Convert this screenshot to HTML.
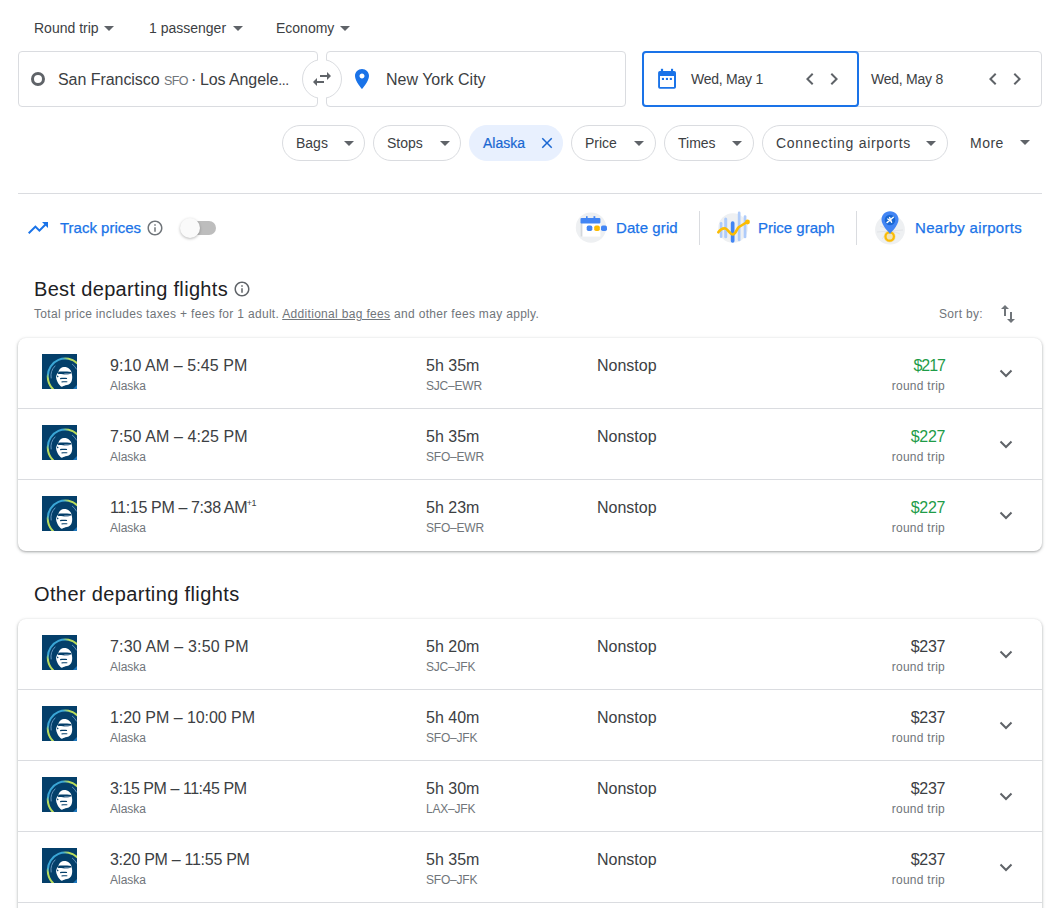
<!DOCTYPE html>
<html><head><meta charset="utf-8">
<style>
*{box-sizing:border-box;margin:0;padding:0}
html,body{width:1049px;height:908px;overflow:hidden;background:#fff;font-family:"Liberation Sans",sans-serif;color:#3c4043}
.a{position:absolute;white-space:nowrap}
svg{position:absolute;overflow:visible}
.t14{font-size:14px;color:#3c4043}
.box{position:absolute;border:1px solid #dadce0;border-radius:4px;background:#fff}
.chip{position:absolute;top:125px;height:36px;border:1px solid #dadce0;border-radius:18px;background:#fff}
.chip span{position:absolute;top:9px;font-size:14px;color:#3c4043;white-space:nowrap}
.card{position:absolute;left:18px;width:1024px;border-radius:8px;background:#fff;box-shadow:0 1px 2px 0 rgba(60,64,67,.3),0 1px 3px 1px rgba(60,64,67,.15)}
.row{position:absolute;left:0;width:1024px;height:71px;border-top:1px solid #dadce0}
.row.first{border-top:none}
.logo{position:absolute;left:24px;top:16px;width:35px;height:35px;background:#05446e;overflow:hidden}
.logo svg{left:0;top:0}
.tm{position:absolute;left:92px;top:19px;font-size:16px;color:#3c4043;white-space:nowrap}
.o{font-style:normal;margin-right:-2px}
.tm sup{font-size:9px;position:relative;top:-1px;vertical-align:top;letter-spacing:-0.4px;margin-left:-0.5px}
.al{position:absolute;left:92px;top:41px;font-size:12px;color:#70757a}
.du{position:absolute;left:408px;top:19px;font-size:16px;color:#3c4043;white-space:nowrap}
.rt{position:absolute;left:408px;top:41px;font-size:12px;color:#70757a;letter-spacing:-0.2px}
.ns{position:absolute;left:579px;top:19px;font-size:16px;color:#3c4043}
.pr{position:absolute;right:97px;top:19px;font-size:16px;color:#3c4043;letter-spacing:-1px}
.pr.g{color:#1f9c48}
.rtp{position:absolute;right:97px;top:41px;font-size:12px;color:#70757a;letter-spacing:0.26px}
.chev{left:981px;top:31px}
.blue{color:#1a73e8}
.med{-webkit-text-stroke:0.25px #1a73e8}
</style></head><body>
<svg width="0" height="0" style="position:absolute">
<defs>
<linearGradient id="akg" gradientUnits="userSpaceOnUse" x1="8" y1="34" x2="33" y2="5">
<stop offset="0" stop-color="#b9dc5c"/><stop offset="0.15" stop-color="#b9dc5c"/><stop offset="0.25" stop-color="#3aa6d6"/><stop offset="0.8" stop-color="#3aa6d6"/><stop offset="0.9" stop-color="#b9dc5c"/><stop offset="1" stop-color="#b9dc5c"/>
</linearGradient>
<g id="ak">
<rect width="35" height="35" fill="#043f6a"/>
<path d="M11.42 35.5 A17.5 17.5 0 0 1 5.8 22.15 A17.5 17.5 0 0 1 35.5 9.5" fill="none" stroke="url(#akg)" stroke-width="2"/>
<path d="M13.3 11.7 A14.5 14.5 0 0 0 9.2 24.4" fill="none" stroke="#7fa9cf" stroke-width="0.8"/>
<path d="M30.1 10 A13.5 13.5 0 0 1 34.6 15.4" fill="none" stroke="#7fa9cf" stroke-width="0.8"/>
<path d="M31 35 L35 31 L35 35Z" fill="#1f78bd"/>
<path d="M16.9 16.5 C18 14.5 19.8 13.1 21.8 13 C24 12.9 26 13.6 27.1 14.7 C28.2 15.6 28.8 16.4 29.1 17.3 C29.8 19.5 30.3 21.5 30.2 23.4 C30.1 25.3 29.8 27 29.1 28.3 C28.5 29.3 27.6 30 26.7 30.4 C25.6 30.8 24.4 31 23.4 31.2 C22 31.6 20.8 32.6 19.8 32.8 C18.8 32.5 18 31.6 17.3 30.8 C16.4 29.8 15.8 28.6 15.3 27.5 C14.7 26.2 14.2 24.8 14.1 23.4 C14.1 22.5 14.2 21.7 14.5 21 C14.9 20 15.5 19.2 16.1 18.5 Z" fill="#fff"/>
<path d="M16.3 17.8 C19 17.4 24 17.4 29.2 17.9 L29.4 19.6 C27 19.4 25 20.6 22.5 20.4 C20.5 20.2 18.5 20.4 16 20 Z" fill="#043f6a"/>
<path d="M22 19.8 C23.5 19.4 26 19.4 27.6 20 C26.4 21 24 21.2 22 20.6Z" fill="#9fb4c8"/>
<path d="M18.1 23.9 C20.3 23.6 23 23.6 25.1 23.9 L25 25.1 C23 25 20.5 25 18.1 25.2 Z" fill="#043f6a"/>
<path d="M19.4 27.5 C21.5 27.3 23.8 27.3 25.5 27.5 L25.2 28.3 C23.5 28.2 21.5 28.3 19.6 28.4 Z" fill="#043f6a"/>
<path d="M14.6 21.6 C15.4 21.4 16.2 21.9 16.6 22.6 L15.8 23.6 C15.2 23.1 14.7 22.4 14.6 21.6Z" fill="#043f6a"/>
</g>
</defs>
</svg>

<!-- top selectors -->
<div class="a t14" style="left:34px;top:20px">Round trip</div>
<svg style="left:97px;top:16px" width="24" height="24" viewBox="0 0 24 24"><path d="M7 10l5 5 5-5z" fill="#5f6368"/></svg>
<div class="a t14" style="left:149px;top:20px">1 passenger</div>
<svg style="left:226px;top:16px" width="24" height="24" viewBox="0 0 24 24"><path d="M7 10l5 5 5-5z" fill="#5f6368"/></svg>
<div class="a t14" style="left:276px;top:20px">Economy</div>
<svg style="left:333px;top:16px" width="24" height="24" viewBox="0 0 24 24"><path d="M7 10l5 5 5-5z" fill="#5f6368"/></svg>

<!-- origin / destination -->
<div class="box" style="left:18px;top:51px;width:300px;height:56px"></div>
<div class="box" style="left:326px;top:51px;width:300px;height:56px"></div>
<div style="position:absolute;left:302px;top:59px;width:40px;height:40px;border-radius:50%;border:1px solid #dadce0;background:#fff"></div>
<div style="position:absolute;left:318px;top:57px;width:8px;height:4px;background:#fff"></div><div style="position:absolute;left:318px;top:97px;width:8px;height:4px;background:#fff"></div>
<svg style="left:310px;top:67px" width="24" height="24" viewBox="0 0 24 24"><path d="M6.99 11L3 15l3.99 4v-3H14v-2H6.99v-3zM21 9l-3.99-4v3H10v2h7.01v3L21 9z" fill="#5f6368"/></svg>
<div style="position:absolute;left:31px;top:72px;width:14px;height:14px;border-radius:50%;border:3px solid #5f6368"></div>
<div class="a" style="left:58px;top:71px;font-size:16px;color:#3c4043;letter-spacing:-0.05px">San Francisco</div>
<div class="a" style="left:164px;top:73.5px;font-size:12.5px;color:#70757a;letter-spacing:-0.6px">SFO</div>
<div class="a" style="left:191px;top:71px;font-size:16px;color:#3c4043">·</div>
<div class="a" style="left:200px;top:71px;font-size:16px;color:#3c4043;letter-spacing:-0.1px">Los Angele<span style="letter-spacing:-0.4px;font-size:14px">...</span></div>
<svg style="left:350px;top:67px" width="24" height="24" viewBox="0 0 24 24"><path d="M12 2C8.130 2 5 5.13 5 9c0 5.25 7 13 7 13s7-7.75 7-13c0-3.87-3.13-7-7-7zm0 9.5c-1.38 0-2.5-1.12-2.5-2.5s1.12-2.5 2.5-2.5 2.5 1.12 2.5 2.5-1.12 2.5-2.5 2.5z" fill="#1a73e8"/></svg>
<div class="a" style="left:386px;top:71px;font-size:16px;color:#3c4043">New York City</div>

<!-- dates -->
<div class="box" style="left:642px;top:51px;width:400px;height:56px"></div>
<div style="position:absolute;left:642px;top:51px;width:217px;height:56px;border:2px solid #1a73e8;border-radius:4px"></div>
<svg style="left:652px;top:64px" width="30" height="30" viewBox="0 0 30 30"><rect x="6.1" y="6.9" width="17.9" height="17.9" rx="1.8" fill="#1a73e8"/><rect x="8" y="12" width="14" height="11" fill="#fff"/><rect x="8.9" y="4.8" width="2.2" height="3" fill="#1a73e8"/><rect x="19" y="4.8" width="2.1" height="3" fill="#1a73e8"/><rect x="9.9" y="13.9" width="2.1" height="2.1" fill="#1a73e8"/><rect x="13.9" y="13.9" width="2.1" height="2.1" fill="#1a73e8"/><rect x="17.8" y="13.9" width="2.1" height="2.1" fill="#1a73e8"/></svg>
<div class="a" style="left:691px;top:71px;font-size:14px;color:#3c4043;letter-spacing:-0.25px">Wed, May 1</div>
<svg style="left:798px;top:67px" width="24" height="24" viewBox="0 0 24 24"><path d="M15.41 7.41L14 6l-6 6 6 6 1.41-1.41L10.83 12z" fill="#5f6368"/></svg>
<svg style="left:822px;top:67px" width="24" height="24" viewBox="0 0 24 24"><path d="M10 6L8.59 7.41 13.17 12l-4.58 4.59L10 18l6-6z" fill="#5f6368"/></svg>
<div class="a" style="left:871px;top:71px;font-size:14px;color:#3c4043;letter-spacing:-0.25px">Wed, May 8</div>
<svg style="left:981px;top:67px" width="24" height="24" viewBox="0 0 24 24"><path d="M15.41 7.41L14 6l-6 6 6 6 1.41-1.41L10.83 12z" fill="#5f6368"/></svg>
<svg style="left:1005px;top:67px" width="24" height="24" viewBox="0 0 24 24"><path d="M10 6L8.59 7.41 13.17 12l-4.58 4.59L10 18l6-6z" fill="#5f6368"/></svg>

<!-- chips -->
<div class="chip" style="left:282px;width:83px"><span style="left:13px">Bags</span><svg style="left:54px;top:5px" width="24" height="24" viewBox="0 0 24 24"><path d="M7 10l5 5 5-5z" fill="#5f6368"/></svg></div>
<div class="chip" style="left:373px;width:88px"><span style="left:13px">Stops</span><svg style="left:59px;top:5px" width="24" height="24" viewBox="0 0 24 24"><path d="M7 10l5 5 5-5z" fill="#5f6368"/></svg></div>
<div class="chip" style="left:469px;width:94px;background:#e8f0fe;border-color:#e8f0fe"><span style="left:13px;color:#1967d2;-webkit-text-stroke:0.2px #1967d2">Alaska</span><svg style="left:68px;top:8px" width="18" height="18" viewBox="0 0 24 24"><path d="M19 6.410L17.59 5 12 10.59 6.41 5 5 6.41 10.59 12 5 17.59 6.41 19 12 13.41 17.59 19 19 17.59 13.41 12z" fill="#1967d2"/></svg></div>
<div class="chip" style="left:571px;width:85px"><span style="left:13px">Price</span><svg style="left:55px;top:5px" width="24" height="24" viewBox="0 0 24 24"><path d="M7 10l5 5 5-5z" fill="#5f6368"/></svg></div>
<div class="chip" style="left:664px;width:90px"><span style="left:13px">Times</span><svg style="left:60px;top:5px" width="24" height="24" viewBox="0 0 24 24"><path d="M7 10l5 5 5-5z" fill="#5f6368"/></svg></div>
<div class="chip" style="left:762px;width:186px"><span style="left:13px;letter-spacing:0.72px">Connecting airports</span><svg style="left:156px;top:5px" width="24" height="24" viewBox="0 0 24 24"><path d="M7 10l5 5 5-5z" fill="#5f6368"/></svg></div>
<div class="a" style="left:970px;top:135px;font-size:14px;color:#3c4043;letter-spacing:0.5px">More</div>
<svg style="left:1013px;top:130px" width="24" height="24" viewBox="0 0 24 24"><path d="M7 10l5 5 5-5z" fill="#5f6368"/></svg>

<div style="position:absolute;left:18px;top:193px;width:1024px;height:1px;background:#dadce0"></div>

<!-- track prices -->
<svg style="left:26px;top:216px" width="24" height="24" viewBox="0 0 24 24"><path d="M16 6l2.29 2.29-4.88 4.88-4-4L2 16.59 3.41 18l6-6 4 4 6.3-6.29L22 12V6z" fill="#1a73e8"/></svg>
<div class="a blue med" style="left:60px;top:219px;font-size:15px">Track prices</div>
<svg style="left:146px;top:219px" width="18" height="18" viewBox="0 0 24 24"><path d="M11 7h2v2h-2zm0 4h2v6h-2zm1-9C6.48 2 2 6.48 2 12s4.48 10 10 10 10-4.48 10-10S17.52 2 12 2zm0 18c-4.41 0-8-3.59-8-8s3.59-8 8-8 8 3.59 8 8-3.59 8-8 8z" fill="#70757a"/></svg>
<div style="position:absolute;left:186px;top:221px;width:30px;height:14px;border-radius:7px;background:#bdbdbd"></div>
<div style="position:absolute;left:180px;top:218px;width:20px;height:20px;border-radius:50%;background:#fafafa;box-shadow:0 1px 3px rgba(0,0,0,.28)"></div>

<!-- views -->
<svg style="left:576px;top:212px" width="32" height="32" viewBox="0 0 32 32">
<circle cx="15" cy="15.6" r="15.2" fill="#eef0f2"/>
<rect x="4.5" y="10" width="19.9" height="14.6" fill="#fff"/><rect x="4.5" y="10" width="1.9" height="14.6" fill="#d4d7db"/>
<rect x="4.5" y="6" width="19.9" height="5.6" rx="1" fill="#4285f4"/>
<rect x="10" y="4.2" width="1.6" height="2.5" fill="#4285f4"/><rect x="17.5" y="4.2" width="1.8" height="2.5" fill="#4285f4"/>
<rect x="10.7" y="13.4" width="5.6" height="5.6" rx="1.8" fill="#4285f4"/><rect x="18.2" y="13.4" width="5.6" height="5.6" rx="1.8" fill="#fbbc04"/><rect x="25" y="13.4" width="6" height="5.6" rx="1.8" fill="#4285f4"/>
</svg>
<div class="a blue med" style="left:616px;top:219px;font-size:15px;letter-spacing:0.1px">Date grid</div>
<div style="position:absolute;left:699px;top:211px;width:1px;height:34px;background:#dadce0"></div>
<svg style="left:716px;top:208px" width="36" height="38" viewBox="0 0 36 38">
<circle cx="17" cy="20" r="14.8" fill="#eef0f2"/>
<rect x="3.8" y="14" width="2.6" height="16" rx="1.3" fill="#aecbfa"/>
<rect x="8.2" y="9.6" width="3" height="20.6" rx="1.5" fill="#aecbfa"/>
<rect x="14.8" y="13.2" width="3.7" height="21.5" rx="1.8" fill="#4285f4"/>
<rect x="21.8" y="3.6" width="2.7" height="29.6" rx="1.3" fill="#aecbfa"/>
<rect x="27.7" y="7.3" width="2.7" height="22.9" rx="1.3" fill="#aecbfa"/>
<path d="M2.3 24.3 C4 22 6.5 19.5 9.7 20.6 C12 21.5 14.5 27 17 26.5 C20 26 21 20 23 19 C25.5 17.5 28 16 31 14" fill="none" stroke="#fbbc04" stroke-width="2.6" stroke-linecap="round"/>
<circle cx="31.5" cy="14" r="2.4" fill="#fbbc04"/>
</svg>
<div class="a blue med" style="left:758px;top:219px;font-size:15px">Price graph</div>
<div style="position:absolute;left:856px;top:211px;width:1px;height:34px;background:#dadce0"></div>
<svg style="left:872px;top:208px" width="36" height="40" viewBox="0 0 36 40">
<circle cx="18" cy="21.7" r="14.9" fill="#eef0f2"/>
<path d="M8 18 L28 26 M10 31 L26 12 M5 24 L31 22" stroke="#e2e4e7" stroke-width="1"/>
<circle cx="17.7" cy="28.5" r="4.2" fill="none" stroke="#fbbc04" stroke-width="2.2"/>
<circle cx="17.7" cy="28.5" r="6" fill="#fbbc04" opacity="0.25"/>
<path d="M18 3.3 C12.8 3.3 9.5 7 9.5 11.8 C9.5 17.5 18 25.8 18 25.8 C18 25.8 26.5 17.5 26.5 11.8 C26.5 7 23.2 3.3 18 3.3 Z" fill="#4285f4"/>
<circle cx="18" cy="12" r="5.3" fill="#1967d2"/>
<path d="M15 14.6 L21.3 9.3 M15.8 11 L19.3 13.3 M17.6 9.6 L19.6 14.3" stroke="#fff" stroke-width="1.4" stroke-linecap="round"/>
</svg>
<div class="a blue med" style="left:915px;top:219px;font-size:15px;letter-spacing:0.3px">Nearby airports</div>

<!-- heading -->
<div class="a" style="left:34px;top:278px;font-size:20px;color:#202124;letter-spacing:0.33px">Best departing flights</div>
<svg style="left:233px;top:280px" width="18" height="18" viewBox="0 0 24 24"><path d="M11 7h2v2h-2zm0 4h2v6h-2zm1-9C6.48 2 2 6.48 2 12s4.48 10 10 10 10-4.48 10-10S17.52 2 12 2zm0 18c-4.41 0-8-3.59-8-8s3.59-8 8-8 8 3.59 8 8-3.59 8-8 8z" fill="#5f6368"/></svg>
<div class="a" style="left:34px;top:307px;font-size:12px;color:#70757a;letter-spacing:0.32px">Total price includes taxes + fees for 1 adult. <span style="text-decoration:underline">Additional bag fees</span> and other fees may apply.</div>
<div class="a" style="left:939px;top:307px;font-size:12px;color:#70757a;letter-spacing:0.32px">Sort by:</div>
<svg style="left:996px;top:302px" width="24" height="24" viewBox="0 0 24 24"><path d="M16 17.01V10h-2v7.01h-3L15 21l4-3.99h-3zM9 3L5 6.99h3V14h2V6.99h3L9 3z" fill="#70757a"/></svg>

<div class="card" style="top:338px;height:213px">
<div class="row first" style="top:0px">
<div class="logo"><svg width="35" height="35" viewBox="0 0 35 35"><g>
<rect width="35" height="35" fill="#043f6a"/>
<path d="M11.42 35.5 A17.5 17.5 0 0 1 5.8 22.15 A17.5 17.5 0 0 1 35.5 9.5" fill="none" stroke="url(#akg)" stroke-width="2"/>
<path d="M13.3 11.7 A14.5 14.5 0 0 0 9.2 24.4" fill="none" stroke="#7fa9cf" stroke-width="0.8"/>
<path d="M30.1 10 A13.5 13.5 0 0 1 34.6 15.4" fill="none" stroke="#7fa9cf" stroke-width="0.8"/>
<path d="M31 35 L35 31 L35 35Z" fill="#1f78bd"/>
<path d="M16.9 16.5 C18 14.5 19.8 13.1 21.8 13 C24 12.9 26 13.6 27.1 14.7 C28.2 15.6 28.8 16.4 29.1 17.3 C29.8 19.5 30.3 21.5 30.2 23.4 C30.1 25.3 29.8 27 29.1 28.3 C28.5 29.3 27.6 30 26.7 30.4 C25.6 30.8 24.4 31 23.4 31.2 C22 31.6 20.8 32.6 19.8 32.8 C18.8 32.5 18 31.6 17.3 30.8 C16.4 29.8 15.8 28.6 15.3 27.5 C14.7 26.2 14.2 24.8 14.1 23.4 C14.1 22.5 14.2 21.7 14.5 21 C14.9 20 15.5 19.2 16.1 18.5 Z" fill="#fff"/>
<path d="M16.3 17.8 C19 17.4 24 17.4 29.2 17.9 L29.4 19.6 C27 19.4 25 20.6 22.5 20.4 C20.5 20.2 18.5 20.4 16 20 Z" fill="#043f6a"/>
<path d="M22 19.8 C23.5 19.4 26 19.4 27.6 20 C26.4 21 24 21.2 22 20.6Z" fill="#9fb4c8"/>
<path d="M18.1 23.9 C20.3 23.6 23 23.6 25.1 23.9 L25 25.1 C23 25 20.5 25 18.1 25.2 Z" fill="#043f6a"/>
<path d="M19.4 27.5 C21.5 27.3 23.8 27.3 25.5 27.5 L25.2 28.3 C23.5 28.2 21.5 28.3 19.6 28.4 Z" fill="#043f6a"/>
<path d="M14.6 21.6 C15.4 21.4 16.2 21.9 16.6 22.6 L15.8 23.6 C15.2 23.1 14.7 22.4 14.6 21.6Z" fill="#043f6a"/>
</g></svg></div>
<div class="tm" style="letter-spacing:0.08px">9:10 AM – 5:45 PM</div><div class="al">Alaska</div>
<div class="du">5h 35m</div><div class="rt">SJC–EWR</div>
<div class="ns">Nonstop</div>
<div class="pr g" style="letter-spacing:-1px">$217</div><div class="rtp">round trip</div>
<svg class="chev" width="14" height="9" viewBox="0 0 14 9"><path d="M1.5 1.5 L7 7 L12.5 1.5" fill="none" stroke="#5f6368" stroke-width="2"/></svg>
</div>
<div class="row" style="top:70px">
<div class="logo"><svg width="35" height="35" viewBox="0 0 35 35"><g>
<rect width="35" height="35" fill="#043f6a"/>
<path d="M11.42 35.5 A17.5 17.5 0 0 1 5.8 22.15 A17.5 17.5 0 0 1 35.5 9.5" fill="none" stroke="url(#akg)" stroke-width="2"/>
<path d="M13.3 11.7 A14.5 14.5 0 0 0 9.2 24.4" fill="none" stroke="#7fa9cf" stroke-width="0.8"/>
<path d="M30.1 10 A13.5 13.5 0 0 1 34.6 15.4" fill="none" stroke="#7fa9cf" stroke-width="0.8"/>
<path d="M31 35 L35 31 L35 35Z" fill="#1f78bd"/>
<path d="M16.9 16.5 C18 14.5 19.8 13.1 21.8 13 C24 12.9 26 13.6 27.1 14.7 C28.2 15.6 28.8 16.4 29.1 17.3 C29.8 19.5 30.3 21.5 30.2 23.4 C30.1 25.3 29.8 27 29.1 28.3 C28.5 29.3 27.6 30 26.7 30.4 C25.6 30.8 24.4 31 23.4 31.2 C22 31.6 20.8 32.6 19.8 32.8 C18.8 32.5 18 31.6 17.3 30.8 C16.4 29.8 15.8 28.6 15.3 27.5 C14.7 26.2 14.2 24.8 14.1 23.4 C14.1 22.5 14.2 21.7 14.5 21 C14.9 20 15.5 19.2 16.1 18.5 Z" fill="#fff"/>
<path d="M16.3 17.8 C19 17.4 24 17.4 29.2 17.9 L29.4 19.6 C27 19.4 25 20.6 22.5 20.4 C20.5 20.2 18.5 20.4 16 20 Z" fill="#043f6a"/>
<path d="M22 19.8 C23.5 19.4 26 19.4 27.6 20 C26.4 21 24 21.2 22 20.6Z" fill="#9fb4c8"/>
<path d="M18.1 23.9 C20.3 23.6 23 23.6 25.1 23.9 L25 25.1 C23 25 20.5 25 18.1 25.2 Z" fill="#043f6a"/>
<path d="M19.4 27.5 C21.5 27.3 23.8 27.3 25.5 27.5 L25.2 28.3 C23.5 28.2 21.5 28.3 19.6 28.4 Z" fill="#043f6a"/>
<path d="M14.6 21.6 C15.4 21.4 16.2 21.9 16.6 22.6 L15.8 23.6 C15.2 23.1 14.7 22.4 14.6 21.6Z" fill="#043f6a"/>
</g></svg></div>
<div class="tm" style="letter-spacing:0.1px">7:50 AM – 4:25 PM</div><div class="al">Alaska</div>
<div class="du">5h 35m</div><div class="rt">SFO–EWR</div>
<div class="ns">Nonstop</div>
<div class="pr g" style="letter-spacing:-0.35px">$227</div><div class="rtp">round trip</div>
<svg class="chev" width="14" height="9" viewBox="0 0 14 9"><path d="M1.5 1.5 L7 7 L12.5 1.5" fill="none" stroke="#5f6368" stroke-width="2"/></svg>
</div>
<div class="row" style="top:141px">
<div class="logo"><svg width="35" height="35" viewBox="0 0 35 35"><g>
<rect width="35" height="35" fill="#043f6a"/>
<path d="M11.42 35.5 A17.5 17.5 0 0 1 5.8 22.15 A17.5 17.5 0 0 1 35.5 9.5" fill="none" stroke="url(#akg)" stroke-width="2"/>
<path d="M13.3 11.7 A14.5 14.5 0 0 0 9.2 24.4" fill="none" stroke="#7fa9cf" stroke-width="0.8"/>
<path d="M30.1 10 A13.5 13.5 0 0 1 34.6 15.4" fill="none" stroke="#7fa9cf" stroke-width="0.8"/>
<path d="M31 35 L35 31 L35 35Z" fill="#1f78bd"/>
<path d="M16.9 16.5 C18 14.5 19.8 13.1 21.8 13 C24 12.9 26 13.6 27.1 14.7 C28.2 15.6 28.8 16.4 29.1 17.3 C29.8 19.5 30.3 21.5 30.2 23.4 C30.1 25.3 29.8 27 29.1 28.3 C28.5 29.3 27.6 30 26.7 30.4 C25.6 30.8 24.4 31 23.4 31.2 C22 31.6 20.8 32.6 19.8 32.8 C18.8 32.5 18 31.6 17.3 30.8 C16.4 29.8 15.8 28.6 15.3 27.5 C14.7 26.2 14.2 24.8 14.1 23.4 C14.1 22.5 14.2 21.7 14.5 21 C14.9 20 15.5 19.2 16.1 18.5 Z" fill="#fff"/>
<path d="M16.3 17.8 C19 17.4 24 17.4 29.2 17.9 L29.4 19.6 C27 19.4 25 20.6 22.5 20.4 C20.5 20.2 18.5 20.4 16 20 Z" fill="#043f6a"/>
<path d="M22 19.8 C23.5 19.4 26 19.4 27.6 20 C26.4 21 24 21.2 22 20.6Z" fill="#9fb4c8"/>
<path d="M18.1 23.9 C20.3 23.6 23 23.6 25.1 23.9 L25 25.1 C23 25 20.5 25 18.1 25.2 Z" fill="#043f6a"/>
<path d="M19.4 27.5 C21.5 27.3 23.8 27.3 25.5 27.5 L25.2 28.3 C23.5 28.2 21.5 28.3 19.6 28.4 Z" fill="#043f6a"/>
<path d="M14.6 21.6 C15.4 21.4 16.2 21.9 16.6 22.6 L15.8 23.6 C15.2 23.1 14.7 22.4 14.6 21.6Z" fill="#043f6a"/>
</g></svg></div>
<div class="tm" style="letter-spacing:-0.37px">11:15 PM – 7:38 AM<sup>+1</sup></div><div class="al">Alaska</div>
<div class="du">5h 23m</div><div class="rt">SFO–EWR</div>
<div class="ns">Nonstop</div>
<div class="pr g" style="letter-spacing:-0.35px">$227</div><div class="rtp">round trip</div>
<svg class="chev" width="14" height="9" viewBox="0 0 14 9"><path d="M1.5 1.5 L7 7 L12.5 1.5" fill="none" stroke="#5f6368" stroke-width="2"/></svg>
</div>
</div>

<div class="a" style="left:34px;top:583px;font-size:20px;color:#202124;letter-spacing:0.38px">Other departing flights</div>

<div class="card" style="top:619px;height:320px">
<div class="row first" style="top:0px">
<div class="logo"><svg width="35" height="35" viewBox="0 0 35 35"><g>
<rect width="35" height="35" fill="#043f6a"/>
<path d="M11.42 35.5 A17.5 17.5 0 0 1 5.8 22.15 A17.5 17.5 0 0 1 35.5 9.5" fill="none" stroke="url(#akg)" stroke-width="2"/>
<path d="M13.3 11.7 A14.5 14.5 0 0 0 9.2 24.4" fill="none" stroke="#7fa9cf" stroke-width="0.8"/>
<path d="M30.1 10 A13.5 13.5 0 0 1 34.6 15.4" fill="none" stroke="#7fa9cf" stroke-width="0.8"/>
<path d="M31 35 L35 31 L35 35Z" fill="#1f78bd"/>
<path d="M16.9 16.5 C18 14.5 19.8 13.1 21.8 13 C24 12.9 26 13.6 27.1 14.7 C28.2 15.6 28.8 16.4 29.1 17.3 C29.8 19.5 30.3 21.5 30.2 23.4 C30.1 25.3 29.8 27 29.1 28.3 C28.5 29.3 27.6 30 26.7 30.4 C25.6 30.8 24.4 31 23.4 31.2 C22 31.6 20.8 32.6 19.8 32.8 C18.8 32.5 18 31.6 17.3 30.8 C16.4 29.8 15.8 28.6 15.3 27.5 C14.7 26.2 14.2 24.8 14.1 23.4 C14.1 22.5 14.2 21.7 14.5 21 C14.9 20 15.5 19.2 16.1 18.5 Z" fill="#fff"/>
<path d="M16.3 17.8 C19 17.4 24 17.4 29.2 17.9 L29.4 19.6 C27 19.4 25 20.6 22.5 20.4 C20.5 20.2 18.5 20.4 16 20 Z" fill="#043f6a"/>
<path d="M22 19.8 C23.5 19.4 26 19.4 27.6 20 C26.4 21 24 21.2 22 20.6Z" fill="#9fb4c8"/>
<path d="M18.1 23.9 C20.3 23.6 23 23.6 25.1 23.9 L25 25.1 C23 25 20.5 25 18.1 25.2 Z" fill="#043f6a"/>
<path d="M19.4 27.5 C21.5 27.3 23.8 27.3 25.5 27.5 L25.2 28.3 C23.5 28.2 21.5 28.3 19.6 28.4 Z" fill="#043f6a"/>
<path d="M14.6 21.6 C15.4 21.4 16.2 21.9 16.6 22.6 L15.8 23.6 C15.2 23.1 14.7 22.4 14.6 21.6Z" fill="#043f6a"/>
</g></svg></div>
<div class="tm" style="letter-spacing:0.15px">7:30 AM – 3:50 PM</div><div class="al">Alaska</div>
<div class="du">5h 20m</div><div class="rt">SJC–JFK</div>
<div class="ns">Nonstop</div>
<div class="pr" style="letter-spacing:-0.35px">$237</div><div class="rtp">round trip</div>
<svg class="chev" width="14" height="9" viewBox="0 0 14 9"><path d="M1.5 1.5 L7 7 L12.5 1.5" fill="none" stroke="#5f6368" stroke-width="2"/></svg>
</div>
<div class="row" style="top:70px">
<div class="logo"><svg width="35" height="35" viewBox="0 0 35 35"><g>
<rect width="35" height="35" fill="#043f6a"/>
<path d="M11.42 35.5 A17.5 17.5 0 0 1 5.8 22.15 A17.5 17.5 0 0 1 35.5 9.5" fill="none" stroke="url(#akg)" stroke-width="2"/>
<path d="M13.3 11.7 A14.5 14.5 0 0 0 9.2 24.4" fill="none" stroke="#7fa9cf" stroke-width="0.8"/>
<path d="M30.1 10 A13.5 13.5 0 0 1 34.6 15.4" fill="none" stroke="#7fa9cf" stroke-width="0.8"/>
<path d="M31 35 L35 31 L35 35Z" fill="#1f78bd"/>
<path d="M16.9 16.5 C18 14.5 19.8 13.1 21.8 13 C24 12.9 26 13.6 27.1 14.7 C28.2 15.6 28.8 16.4 29.1 17.3 C29.8 19.5 30.3 21.5 30.2 23.4 C30.1 25.3 29.8 27 29.1 28.3 C28.5 29.3 27.6 30 26.7 30.4 C25.6 30.8 24.4 31 23.4 31.2 C22 31.6 20.8 32.6 19.8 32.8 C18.8 32.5 18 31.6 17.3 30.8 C16.4 29.8 15.8 28.6 15.3 27.5 C14.7 26.2 14.2 24.8 14.1 23.4 C14.1 22.5 14.2 21.7 14.5 21 C14.9 20 15.5 19.2 16.1 18.5 Z" fill="#fff"/>
<path d="M16.3 17.8 C19 17.4 24 17.4 29.2 17.9 L29.4 19.6 C27 19.4 25 20.6 22.5 20.4 C20.5 20.2 18.5 20.4 16 20 Z" fill="#043f6a"/>
<path d="M22 19.8 C23.5 19.4 26 19.4 27.6 20 C26.4 21 24 21.2 22 20.6Z" fill="#9fb4c8"/>
<path d="M18.1 23.9 C20.3 23.6 23 23.6 25.1 23.9 L25 25.1 C23 25 20.5 25 18.1 25.2 Z" fill="#043f6a"/>
<path d="M19.4 27.5 C21.5 27.3 23.8 27.3 25.5 27.5 L25.2 28.3 C23.5 28.2 21.5 28.3 19.6 28.4 Z" fill="#043f6a"/>
<path d="M14.6 21.6 C15.4 21.4 16.2 21.9 16.6 22.6 L15.8 23.6 C15.2 23.1 14.7 22.4 14.6 21.6Z" fill="#043f6a"/>
</g></svg></div>
<div class="tm" style="letter-spacing:-0.05px">1:20 PM – 10:00 PM</div><div class="al">Alaska</div>
<div class="du">5h 40m</div><div class="rt">SFO–JFK</div>
<div class="ns">Nonstop</div>
<div class="pr" style="letter-spacing:-0.35px">$237</div><div class="rtp">round trip</div>
<svg class="chev" width="14" height="9" viewBox="0 0 14 9"><path d="M1.5 1.5 L7 7 L12.5 1.5" fill="none" stroke="#5f6368" stroke-width="2"/></svg>
</div>
<div class="row" style="top:141px">
<div class="logo"><svg width="35" height="35" viewBox="0 0 35 35"><g>
<rect width="35" height="35" fill="#043f6a"/>
<path d="M11.42 35.5 A17.5 17.5 0 0 1 5.8 22.15 A17.5 17.5 0 0 1 35.5 9.5" fill="none" stroke="url(#akg)" stroke-width="2"/>
<path d="M13.3 11.7 A14.5 14.5 0 0 0 9.2 24.4" fill="none" stroke="#7fa9cf" stroke-width="0.8"/>
<path d="M30.1 10 A13.5 13.5 0 0 1 34.6 15.4" fill="none" stroke="#7fa9cf" stroke-width="0.8"/>
<path d="M31 35 L35 31 L35 35Z" fill="#1f78bd"/>
<path d="M16.9 16.5 C18 14.5 19.8 13.1 21.8 13 C24 12.9 26 13.6 27.1 14.7 C28.2 15.6 28.8 16.4 29.1 17.3 C29.8 19.5 30.3 21.5 30.2 23.4 C30.1 25.3 29.8 27 29.1 28.3 C28.5 29.3 27.6 30 26.7 30.4 C25.6 30.8 24.4 31 23.4 31.2 C22 31.6 20.8 32.6 19.8 32.8 C18.8 32.5 18 31.6 17.3 30.8 C16.4 29.8 15.8 28.6 15.3 27.5 C14.7 26.2 14.2 24.8 14.1 23.4 C14.1 22.5 14.2 21.7 14.5 21 C14.9 20 15.5 19.2 16.1 18.5 Z" fill="#fff"/>
<path d="M16.3 17.8 C19 17.4 24 17.4 29.2 17.9 L29.4 19.6 C27 19.4 25 20.6 22.5 20.4 C20.5 20.2 18.5 20.4 16 20 Z" fill="#043f6a"/>
<path d="M22 19.8 C23.5 19.4 26 19.4 27.6 20 C26.4 21 24 21.2 22 20.6Z" fill="#9fb4c8"/>
<path d="M18.1 23.9 C20.3 23.6 23 23.6 25.1 23.9 L25 25.1 C23 25 20.5 25 18.1 25.2 Z" fill="#043f6a"/>
<path d="M19.4 27.5 C21.5 27.3 23.8 27.3 25.5 27.5 L25.2 28.3 C23.5 28.2 21.5 28.3 19.6 28.4 Z" fill="#043f6a"/>
<path d="M14.6 21.6 C15.4 21.4 16.2 21.9 16.6 22.6 L15.8 23.6 C15.2 23.1 14.7 22.4 14.6 21.6Z" fill="#043f6a"/>
</g></svg></div>
<div class="tm" style="letter-spacing:-0.45px">3:15 PM – 11:45 PM</div><div class="al">Alaska</div>
<div class="du">5h 30m</div><div class="rt">LAX–JFK</div>
<div class="ns">Nonstop</div>
<div class="pr" style="letter-spacing:-0.35px">$237</div><div class="rtp">round trip</div>
<svg class="chev" width="14" height="9" viewBox="0 0 14 9"><path d="M1.5 1.5 L7 7 L12.5 1.5" fill="none" stroke="#5f6368" stroke-width="2"/></svg>
</div>
<div class="row" style="top:212px">
<div class="logo"><svg width="35" height="35" viewBox="0 0 35 35"><g>
<rect width="35" height="35" fill="#043f6a"/>
<path d="M11.42 35.5 A17.5 17.5 0 0 1 5.8 22.15 A17.5 17.5 0 0 1 35.5 9.5" fill="none" stroke="url(#akg)" stroke-width="2"/>
<path d="M13.3 11.7 A14.5 14.5 0 0 0 9.2 24.4" fill="none" stroke="#7fa9cf" stroke-width="0.8"/>
<path d="M30.1 10 A13.5 13.5 0 0 1 34.6 15.4" fill="none" stroke="#7fa9cf" stroke-width="0.8"/>
<path d="M31 35 L35 31 L35 35Z" fill="#1f78bd"/>
<path d="M16.9 16.5 C18 14.5 19.8 13.1 21.8 13 C24 12.9 26 13.6 27.1 14.7 C28.2 15.6 28.8 16.4 29.1 17.3 C29.8 19.5 30.3 21.5 30.2 23.4 C30.1 25.3 29.8 27 29.1 28.3 C28.5 29.3 27.6 30 26.7 30.4 C25.6 30.8 24.4 31 23.4 31.2 C22 31.6 20.8 32.6 19.8 32.8 C18.8 32.5 18 31.6 17.3 30.8 C16.4 29.8 15.8 28.6 15.3 27.5 C14.7 26.2 14.2 24.8 14.1 23.4 C14.1 22.5 14.2 21.7 14.5 21 C14.9 20 15.5 19.2 16.1 18.5 Z" fill="#fff"/>
<path d="M16.3 17.8 C19 17.4 24 17.4 29.2 17.9 L29.4 19.6 C27 19.4 25 20.6 22.5 20.4 C20.5 20.2 18.5 20.4 16 20 Z" fill="#043f6a"/>
<path d="M22 19.8 C23.5 19.4 26 19.4 27.6 20 C26.4 21 24 21.2 22 20.6Z" fill="#9fb4c8"/>
<path d="M18.1 23.9 C20.3 23.6 23 23.6 25.1 23.9 L25 25.1 C23 25 20.5 25 18.1 25.2 Z" fill="#043f6a"/>
<path d="M19.4 27.5 C21.5 27.3 23.8 27.3 25.5 27.5 L25.2 28.3 C23.5 28.2 21.5 28.3 19.6 28.4 Z" fill="#043f6a"/>
<path d="M14.6 21.6 C15.4 21.4 16.2 21.9 16.6 22.6 L15.8 23.6 C15.2 23.1 14.7 22.4 14.6 21.6Z" fill="#043f6a"/>
</g></svg></div>
<div class="tm" style="letter-spacing:-0.28px">3:20 PM – 11:55 PM</div><div class="al">Alaska</div>
<div class="du">5h 35m</div><div class="rt">SFO–JFK</div>
<div class="ns">Nonstop</div>
<div class="pr" style="letter-spacing:-0.35px">$237</div><div class="rtp">round trip</div>
<svg class="chev" width="14" height="9" viewBox="0 0 14 9"><path d="M1.5 1.5 L7 7 L12.5 1.5" fill="none" stroke="#5f6368" stroke-width="2"/></svg>
</div>
<div class="row" style="top:283px"></div>
</div>

</body></html>
